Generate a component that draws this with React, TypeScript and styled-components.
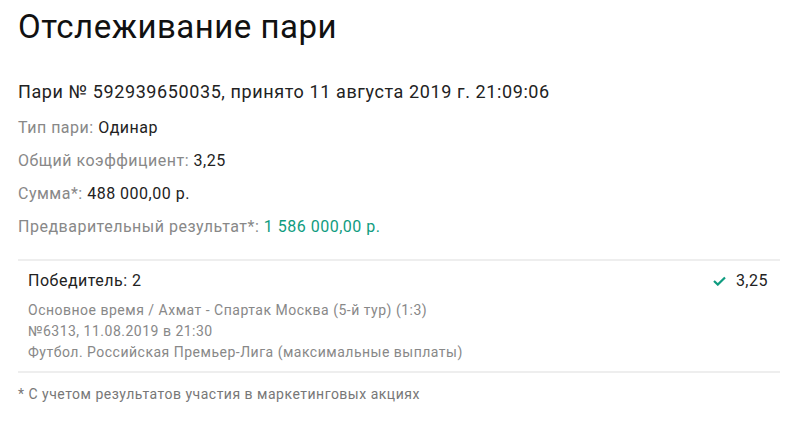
import React from 'react';
import styled, { createGlobalStyle } from 'styled-components';

const GlobalStyle = createGlobalStyle`
  body {
    margin: 0;
    background: #fff;
    font-family: Roboto, "Noto Sans", sans-serif;
    color: #222;
    letter-spacing: 0.5px;
  }
`;

const Page = styled.div`
  padding: 0 20px 0 18px;
`;

const Title = styled.h1`
  margin: 7px 0 0;
  font-size: 33px;
  line-height: 40px;
  font-weight: 400;
  color: #111;
`;

const BetHeader = styled.div`
  margin-top: 33px;
  font-size: 18px;
  line-height: 24px;
  letter-spacing: 0.6px;
  color: #222;
`;

const InfoList = styled.div`
  margin-top: 13px;
  display: flex;
  flex-direction: column;
  gap: 11px;
`;

const InfoRow = styled.div`
  font-size: 16px;
  line-height: 22px;
`;

const Label = styled.span`
  color: #888;
`;

const Value = styled.span<{ $green?: boolean }>`
  color: ${(p) => (p.$green ? '#0f9c80' : '#222')};
`;

const EventCard = styled.div`
  margin-top: 21px;
  border-top: 2px solid #eee;
  border-bottom: 2px solid #eee;
  padding: 10px 12px 8px 10px;
`;

const OutcomeRow = styled.div`
  display: flex;
  justify-content: space-between;
  align-items: center;
  font-size: 16px;
  line-height: 20px;
  color: #222;
`;

const Odds = styled.div`
  display: flex;
  align-items: center;
  gap: 10px;
`;

const Details = styled.div`
  margin-top: 9px;
  font-size: 14px;
  line-height: 21px;
  color: #888;
`;

const Footnote = styled.div`
  margin-top: 12px;
  font-size: 14px;
  line-height: 18px;
  color: #777;
`;

const Check = () => (
  <svg width="13" height="10" viewBox="0 0 13 10">
    <polyline points="1,5 4.8,8.6 12,1.5" fill="none" stroke="#0f9c80" strokeWidth="2.2" />
  </svg>
);

export default function App() {
  return (
    <>
      <GlobalStyle />
      <Page>
        <Title>Отслеживание пари</Title>
        <BetHeader>Пари № 592939650035, принято 11 августа 2019 г. 21:09:06</BetHeader>
        <InfoList>
          <InfoRow>
            <Label>Тип пари: </Label>
            <Value>Одинар</Value>
          </InfoRow>
          <InfoRow>
            <Label>Общий коэффициент: </Label>
            <Value>3,25</Value>
          </InfoRow>
          <InfoRow>
            <Label>Сумма*: </Label>
            <Value>488 000,00 р.</Value>
          </InfoRow>
          <InfoRow>
            <Label>Предварительный результат*: </Label>
            <Value $green>1 586 000,00 р.</Value>
          </InfoRow>
        </InfoList>
        <EventCard>
          <OutcomeRow>
            <span>Победитель: 2</span>
            <Odds>
              <Check />
              <span>3,25</span>
            </Odds>
          </OutcomeRow>
          <Details>
            <div>Основное время / Ахмат - Спартак Москва (5-й тур) (1:3)</div>
            <div>№6313, 11.08.2019 в 21:30</div>
            <div>Футбол. Российская Премьер-Лига (максимальные выплаты)</div>
          </Details>
        </EventCard>
        <Footnote>* С учетом результатов участия в маркетинговых акциях</Footnote>
      </Page>
    </>
  );
}
